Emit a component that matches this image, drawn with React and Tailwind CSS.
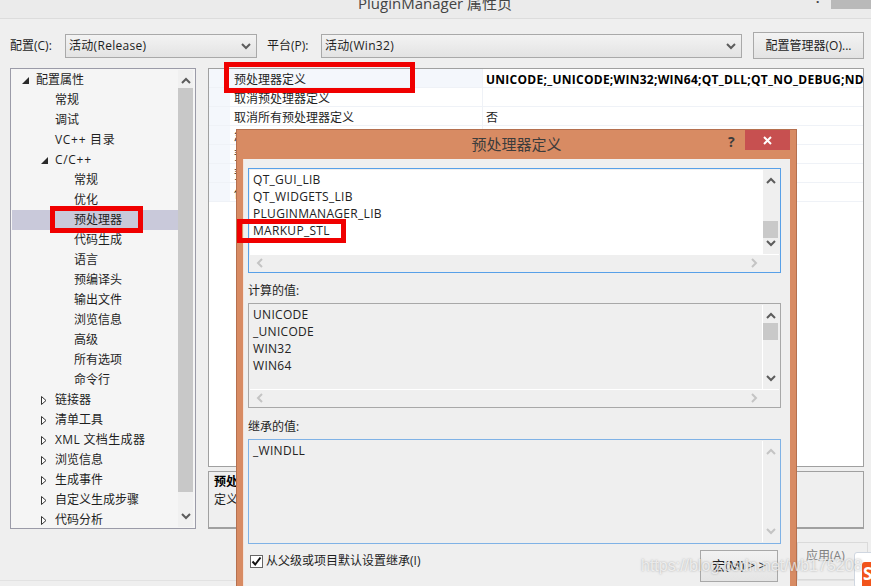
import React from 'react';

const FONT = '[font-family:"Open_Sans","Noto_Sans_CJK_SC",sans-serif]';

const treeRows = [
  { label: '配置属性', level: 0, arrow: 'open' },
  { label: '常规', level: 1 },
  { label: '调试', level: 1 },
  { label: 'VC++ 目录', level: 1, track: 'tracking-[0.7px]' },
  { label: 'C/C++', level: 1, arrow: 'open', track: 'tracking-[0.7px]' },
  { label: '常规', level: 2 },
  { label: '优化', level: 2 },
  { label: '预处理器', level: 2, selected: true },
  { label: '代码生成', level: 2 },
  { label: '语言', level: 2 },
  { label: '预编译头', level: 2 },
  { label: '输出文件', level: 2 },
  { label: '浏览信息', level: 2 },
  { label: '高级', level: 2 },
  { label: '所有选项', level: 2 },
  { label: '命令行', level: 2 },
  { label: '链接器', level: 1, arrow: 'closed' },
  { label: '清单工具', level: 1, arrow: 'closed' },
  { label: 'XML 文档生成器', level: 1, arrow: 'closed', track: 'tracking-[0.35px]' },
  { label: '浏览信息', level: 1, arrow: 'closed' },
  { label: '生成事件', level: 1, arrow: 'closed' },
  { label: '自定义生成步骤', level: 1, arrow: 'closed' },
  { label: '代码分析', level: 1, arrow: 'closed' },
];

const gridRows = [
  { name: '预处理器定义', value: 'UNICODE;_UNICODE;WIN32;WIN64;QT_DLL;QT_NO_DEBUG;NDEBUG;QT_CORE_LIB', active: true },
  { name: '取消预处理器定义', value: '' },
  { name: '取消所有预处理器定义', value: '否' },
  { name: '忽略标准包含路径', value: '否' },
  { name: '预处理到文件', value: '否' },
  { name: '预处理取消显示行号', value: '否' },
  { name: '保留注释', value: '否' },
];

const Chevron = ({ dir = 'down', faded = false }) => {
  const points = {
    up: '1,7 5,3 9,7',
    down: '1,3 5,7 9,3',
    left: '7,1 3,5 7,9',
    right: '3,1 7,5 3,9',
  }[dir];
  return (
    <svg width="10" height="10" viewBox="0 0 10 10" className="block shrink-0">
      <polyline points={points} fill="none" stroke={faded ? '#c4c4c4' : '#5c5c5c'} strokeWidth="2" />
    </svg>
  );
};

const TreeArrow = ({ type }) =>
  type === 'open' ? (
    <svg width="7" height="7" viewBox="0 0 7 7" className="block">
      <polygon points="7,0 7,7 0,7" fill="#2a2a2a" />
    </svg>
  ) : (
    <svg width="6" height="9" viewBox="0 0 6 9" className="block">
      <polygon points="0.5,0.5 5,4.5 0.5,8.5" fill="#fff" stroke="#333" />
    </svg>
  );

const Select = ({ text, className }) => (
  <div className={`h-6 shrink-0 flex items-center justify-between pl-[3px] pr-[5px] border border-[#a9a9a9] bg-gradient-to-b from-[#f3f3f3] to-[#e3e3e3] ${className}`}>
    <span className="tracking-[0.3px]">{text}</span>
    <Chevron dir="down" />
  </div>
);

const VScroll = ({ faded, thumbTop, tall }) => (
  <div className={`relative pr-px flex flex-col items-center justify-between py-[6px] bg-[#efefef] ${tall ? 'w-[17px] border-l border-white' : 'w-4'}`}>
    <Chevron dir="up" faded={faded} />
    {thumbTop != null && <div className="absolute left-0 w-[15px] h-[17px] bg-[#c9c9c9]" style={{ top: thumbTop }} />}
    <Chevron dir="down" faded={faded} />
  </div>
);

const HScroll = () => (
  <div className="h-[17px] pb-px flex items-center justify-between pl-[5px] pr-[20px] bg-[#efefef] border-t border-white">
    <Chevron dir="left" faded />
    <Chevron dir="right" faded />
  </div>
);

const ValueBox = ({ lines, border, bg, thumbTop, faded, hscroll = true, className = '' }) => (
  <div className={`border ${border} p-px flex flex-col ${className}`}>
    <div className="flex flex-1 min-h-0">
      <div className={`flex-1 overflow-hidden pl-[3px] pt-px ${bg}`}>
        {lines.map((l) => (
          <div key={l} className="h-[17px] leading-[17px] tracking-[0.3px] text-[#222]">{l}</div>
        ))}
      </div>
      <VScroll faded={faded} thumbTop={thumbTop} tall={bg !== 'bg-white'} />
    </div>
    {hscroll && <HScroll />}
  </div>
);

// red marks drawn over the screenshot
const Mark = ({ className }) => (
  <div className={`absolute border-[5px] border-[#f00000] ${className}`} />
);

const App = () => (
  <div className={`relative w-[871px] h-[586px] overflow-hidden bg-[#efefef] text-[12px] text-[#1e1e1e] flex flex-col ${FONT}`}>
    {/* window title */}
    <div className="relative h-[19px] shrink-0 overflow-hidden bg-[#ebebeb] border-b border-[#dcdcdc]">
      <div className="absolute left-[358px] top-[-7px] text-[15px] leading-[20px] text-[#444] whitespace-nowrap">PluginManager 属性页</div>
      <div className="absolute left-[815px] top-[-9px] text-[13px] font-bold leading-[14px] text-[#444]">?</div>
      <div className="absolute right-0 top-0 w-10 h-[9px] bg-[#b9b9b9]" />
    </div>

    <div className="flex items-center h-[27px] mt-[13px] pl-[10px] shrink-0">
      <span className="w-[55px] shrink-0">配置(C):</span>
      <Select text="活动(Release)" className="w-[192px]" />
      <span className="ml-[10px] w-[54px] shrink-0">平台(P):</span>
      <Select text="活动(Win32)" className="w-[421px]" />
      <div className="ml-[11px] w-[111px] h-[27px] shrink-0 flex items-center justify-center border border-[#a9a9a9] bg-gradient-to-b from-[#f3f3f3] to-[#e3e3e3]">配置管理器(O)...</div>
    </div>

    <div className="flex h-[461px] mt-[9px] pl-[10px] pr-[7px] shrink-0">
      {/* tree */}
      <div className="w-[186px] h-[461px] shrink-0 border border-[#9b9ba8] bg-[#f5f5f5] flex p-px">
        <div className="flex-1 overflow-hidden">
          {treeRows.map((r, i) => (
            <div key={i} className={`relative h-5 flex items-center ${r.selected ? 'bg-[#c9c9da]' : ''}`}>
              {r.arrow && (
                <span className={`absolute ${r.level === 0 ? 'left-[10px]' : 'left-[29px]'}`}>
                  <TreeArrow type={r.arrow} />
                </span>
              )}
              <span className={`whitespace-nowrap ${r.track || ''} ${r.level === 0 ? 'pl-[24px]' : r.level === 1 ? 'pl-[43px]' : 'pl-[62px]'}`}>{r.label}</span>
            </div>
          ))}
        </div>
        <div className="relative w-[15px] mr-px flex flex-col items-center justify-between py-[6px] bg-[#f0f0f0]">
          <Chevron dir="up" />
          <div className="absolute left-0 top-[18px] w-[15px] h-[404px] bg-[#c8c8c8]" />
          <Chevron dir="down" />
        </div>
      </div>

      {/* property grid + description */}
      <div className="ml-[12px] flex-1 min-w-0 flex flex-col">
        <div className="h-[399px] border border-[#a0a0a0] bg-white">
          {gridRows.map((r) => (
            <div key={r.name} className="flex h-[19px] border-b border-[#eff2f7] leading-[19px]">
              <div className="w-[21px] shrink-0 bg-[#f4f7fc]" />
              <div className={`w-[253px] shrink-0 pl-[4px] pt-px border-r border-[#eff2f7] ${r.active ? 'bg-[#f4f7fc]' : ''}`}>{r.name}</div>
              <div className={`flex-1 min-w-0 pl-[3px] pt-px overflow-hidden whitespace-nowrap ${r.active ? 'font-bold tracking-[0.27px] text-black' : ''}`}>{r.value}</div>
            </div>
          ))}
        </div>
        <div className="mt-[4px] h-[58px] border border-b-2 border-[#a0a0a0] bg-[#efefef] pl-[5px] pt-[1px] leading-[18px]">
          <div className="font-bold text-black">预处理器定义</div>
          <div>定义源文件的预处理器符号。</div>
        </div>
      </div>
    </div>

    <div className="flex justify-end pr-[3px] mt-[13px] shrink-0">
      <div className="w-[71px] h-[38px] pt-[4px] pl-[8px] border border-[#dadada] text-[#808080]">应用(A)</div>
    </div>
    <div className="flex-1 border-t border-[#e2e2e2]" />

    {/* dialog on top of the property page */}
    <div className="absolute left-[236px] top-[129px] w-[561px] h-[470px] bg-[#d88b63] border border-[#b5704f] flex flex-col">
      <div className="relative h-[29px] shrink-0 text-center text-[15px] leading-[28px] text-[#3c3c3c]">
        预处理器定义
        <div className="absolute left-[491px] top-[-2px] text-[14px] font-bold text-[#3c3c3c]">?</div>
        <div className="absolute left-[508px] top-0 w-[45px] h-5 bg-[#c75050] flex items-center justify-center">
          <svg width="9" height="9" viewBox="0 0 9 9">
            <path d="M1 1 L8 8 M8 1 L1 8" stroke="#fff" strokeWidth="2" />
          </svg>
        </div>
      </div>
      <div className="mx-[6px] flex-1 bg-[#efefef] border-l border-[#f4e3da] px-[4px] pt-[9px] flex flex-col">
        <ValueBox
          className="h-[105px] w-[533px] shrink-0"
          border="border-[#57a0e8]"
          bg="bg-white"
          thumbTop={51}
          lines={['QT_GUI_LIB', 'QT_WIDGETS_LIB', 'PLUGINMANAGER_LIB', 'MARKUP_STL']}
        />
        <div className="h-[30px] shrink-0 pt-[9px] leading-[18px]">计算的值:</div>
        <ValueBox
          className="h-[105px] w-[533px] shrink-0"
          border="border-[#a8a8a8]"
          bg="bg-[#efefef]"
          thumbTop={18}
          lines={['UNICODE', '_UNICODE', 'WIN32', 'WIN64']}
        />
        <div className="h-[31px] shrink-0 pt-[10px] leading-[18px]">继承的值:</div>
        <ValueBox
          className="h-[105px] w-[533px] shrink-0"
          border="border-[#7fb2e6]"
          bg="bg-[#efefef]"
          faded
          hscroll={false}
          lines={['_WINDLL']}
        />
        <div className="flex items-start mt-[6px]">
          <div className="mt-[5px] ml-[2px] w-[13px] h-[13px] border border-[#666] bg-white flex items-center justify-center">
            <svg width="11" height="11" viewBox="0 0 11 11">
              <path d="M1.5 5.5 L4.2 8.5 L9.5 1.5" fill="none" stroke="#111" strokeWidth="2" />
            </svg>
          </div>
          <span className="ml-[3px] mt-[2px] leading-[18px]">从父级或项目默认设置继承(I)</span>
          <div className="ml-auto mr-[8px] w-[78px] h-[32px] flex items-center justify-center border border-[#a8a8a8] bg-gradient-to-b from-[#f2f2f2] to-[#e4e4e4] text-[13px]">宏(M) &gt; &gt;</div>
        </div>
      </div>
    </div>

    <Mark className="left-[224px] top-[62px] w-[191px] h-[31px]" />
    <Mark className="left-[50px] top-[206px] w-[93px] h-[27px]" />
    <Mark className="left-[237px] top-[219px] w-[109px] h-[24px] border-[4px]" />

    {/* csdn badge and watermark */}
    <div className="absolute left-[854px] top-[552px] w-[24px] h-[36px] rounded-[3px] bg-white border border-[#cfd6e0] pl-[7px] pt-[9px]">
      <div className="w-[20px] h-[26px] rounded-[3px] bg-[#f2541b] text-white font-bold text-[17px] leading-[24px] pl-[1px]">S</div>
    </div>
    <div className="absolute left-[641px] top-[556px] text-[16px] leading-[20px] whitespace-nowrap text-white/70 [text-shadow:0_0_2px_rgba(90,90,90,0.5)] [font-family:'Liberation_Sans',sans-serif]">https://blog.csdn.net/wb175208</div>
  </div>
);

export default App;
